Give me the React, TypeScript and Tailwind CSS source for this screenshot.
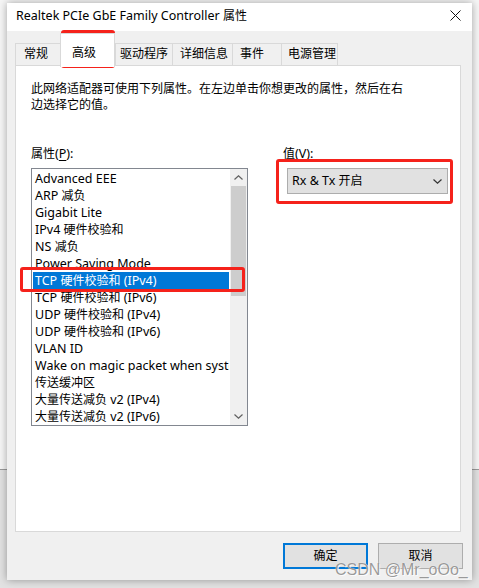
import React from "react";

const CJK = /([\u2E80-\u9FFF\uFF00-\uFFEF\u3000-\u303F]+)/;

function T({ s }: { s: string }) {
  return (
    <>
      {s.split(CJK).map((p, i) =>
        p === "" ? null : CJK.test(p) ? (
          <span key={i} className="text-[12px]">
            {p}
          </span>
        ) : (
          <span key={i}>{p}</span>
        )
      )}
    </>
  );
}

const tabs = [
  { label: "常规", cls: "w-[45px] pl-[8px]" },
  { label: "高级", cls: "w-[55px] pl-[11px]", active: true },
  { label: "驱动程序", cls: "w-[57px] pl-[4px]" },
  { label: "详细信息", cls: "w-[60px] pl-[7px]" },
  { label: "事件", cls: "w-[49px] pl-[7px]" },
  { label: "电源管理", cls: "w-[57px] pl-[6px] border-r" },
];

const items = [
  "Advanced EEE",
  "ARP 减负",
  "Gigabit Lite",
  "IPv4 硬件校验和",
  "NS 减负",
  "Power Saving Mode",
  "TCP 硬件校验和 (IPv4)",
  "TCP 硬件校验和 (IPv6)",
  "UDP 硬件校验和 (IPv4)",
  "UDP 硬件校验和 (IPv6)",
  "VLAN ID",
  "Wake on magic packet when system is in the S0ix power state",
  "传送缓冲区",
  "大量传送减负 v2 (IPv4)",
  "大量传送减负 v2 (IPv6)",
];

function Chevron({ up, color = "#606060" }: { up?: boolean; color?: string }) {
  return (
    <svg width="9" height="5" viewBox="0 0 9 5" fill="none">
      {up ? (
        <path d="M0.5 4.5 L4.5 0.8 L8.5 4.5" stroke={color} strokeWidth="1.2" />
      ) : (
        <path d="M0.5 0.5 L4.5 4.2 L8.5 0.5" stroke={color} strokeWidth="1.2" />
      )}
    </svg>
  );
}

export default function App() {
  return (
    <div className="relative w-[479px] h-[588px] overflow-hidden font-['Noto_Sans','Noto_Sans_CJK_SC',sans-serif] text-[12.5px] text-black">
      {/* desktop background */}
      <div className="flex flex-col h-full">
        <div className="h-[470px] bg-[#f6f6f6] border-b border-[#9a9a9a]" />
        <div className="flex-1 bg-[#e2e2e2]" />
      </div>

      {/* window */}
      <div className="absolute left-[7px] top-[3px] w-[465px] h-[577px] flex flex-col bg-[#f0f0f0] shadow-[0_0_8px_rgba(0,0,0,0.35)]">
        {/* title bar */}
        <div className="h-[28px] bg-white flex items-center pl-[9px] pr-[11px] shrink-0">
          <div className="flex-1 leading-[16px] pb-[2px]">
            <T s="Realtek PCIe GbE Family Controller 属性" />
          </div>
          <svg width="11" height="11" viewBox="0 0 11 11" className="mb-[3px]">
            <path d="M0.5 0.5 L10.5 10.5 M10.5 0.5 L0.5 10.5" stroke="#111" strokeWidth="1" />
          </svg>
        </div>

        {/* body */}
        <div className="flex flex-col pt-[2px] pl-[8px] pr-[11px]">
          {/* tabs */}
          <div className="flex items-end h-[33px]">
            {tabs.map((t) =>
              t.active ? (
                <div
                  key={t.label}
                  className={`relative z-10 h-[34px] -mb-px bg-white border-t border-l border-r border-[#d9d9d9] flex items-start pt-[11px] leading-[16px] ${t.cls}`}
                >
                  <T s={t.label} />
                </div>
              ) : (
                <div
                  key={t.label}
                  className={`h-[23px] bg-[#f0f0f0] border-t border-l border-[#d9d9d9] flex items-center pb-[2px] leading-[16px] ${t.cls}`}
                >
                  <T s={t.label} />
                </div>
              )
            )}
          </div>

          {/* panel */}
          <div className="-mt-px h-[467px] bg-white border border-[#d9d9d9] flex flex-col pt-[15px] pl-[15px]">
            <div className="leading-[16px]">
              <T s="此网络适配器可使用下列属性。在左边单击你想更改的属性，然后在右" />
              <br />
              <T s="边选择它的值。" />
            </div>

            <div className="flex mt-[33px]">
              {/* left column */}
              <div className="flex flex-col w-[217px]">
                <div className="leading-[16px]">
                  <T s="属性(" />
                  <span className="underline underline-offset-2">P</span>
                  <span>):</span>
                </div>
                <div className="mt-[6px] h-[258px] border border-[#828790] bg-white flex">
                  <div className="flex-1 flex flex-col pt-px overflow-hidden">
                    {items.map((it, i) => (
                      <div
                        key={it}
                        className={`h-[17px] leading-[17px] mx-px pl-[2px] whitespace-nowrap overflow-hidden ${
                          i === 6 ? "bg-[#0078d7] text-white" : ""
                        }`}
                      >
                        <T s={it} />
                      </div>
                    ))}
                  </div>
                  <div className="w-[17px] bg-[#f0f0f0] flex flex-col">
                    <div className="h-[17px] flex items-center justify-center">
                      <Chevron up />
                    </div>
                    <div className="h-[110px] mx-px bg-[#cdcdcd]" />
                    <div className="flex-1" />
                    <div className="h-[17px] flex items-center justify-center">
                      <Chevron />
                    </div>
                  </div>
                </div>
              </div>

              {/* right column */}
              <div className="flex flex-col ml-[35px]">
                <div className="leading-[16px]">
                  <T s="值(" />
                  <span className="underline underline-offset-2">V</span>
                  <span>):</span>
                </div>
                <div className="mt-[6px] ml-[4px] w-[161px] h-[26px] bg-[#e1e1e1] border border-[#adadad] flex items-center pl-[4px] pr-[5px]">
                  <div className="flex-1 leading-[16px]">
                    <T s="Rx & Tx 开启" />
                  </div>
                  <Chevron color="#333" />
                </div>
              </div>
            </div>
          </div>

          {/* buttons */}
          <div className="flex justify-end gap-[10px] mt-[11px] pr-[-2px] -mr-[2px]">
            <button className="w-[85px] h-[26px] bg-[#e1e1e1] border-2 border-[#0078d7] flex items-center justify-center leading-[16px]">
              <T s="确定" />
            </button>
            <button className="w-[85px] h-[26px] bg-[#e1e1e1] border border-[#adadad] flex items-center justify-center leading-[16px]">
              <T s="取消" />
            </button>
          </div>
        </div>
      </div>

      {/* red annotation boxes */}
      <div className="absolute left-[61px] top-[30px] w-[54px] h-[38px] border-[3px] border-[#f5221b] rounded-[3px]" />
      <div className="absolute left-[20px] top-[267px] w-[225px] h-[25px] border-[3px] border-[#f5221b] rounded-[3px]" />
      <div className="absolute left-[276px] top-[159px] w-[177px] h-[45px] border-[3px] border-[#f5221b] rounded-[3px]" />

      {/* watermark */}
      <div className="absolute left-[335px] top-[561px] font-['Liberation_Sans',sans-serif] text-[16px] leading-[18px] text-[rgba(120,120,120,0.75)] [text-shadow:0_0_1px_#fff,1px_1px_0_rgba(255,255,255,0.8)] whitespace-nowrap">
        CSDN @Mr_oOo_
      </div>
    </div>
  );
}
